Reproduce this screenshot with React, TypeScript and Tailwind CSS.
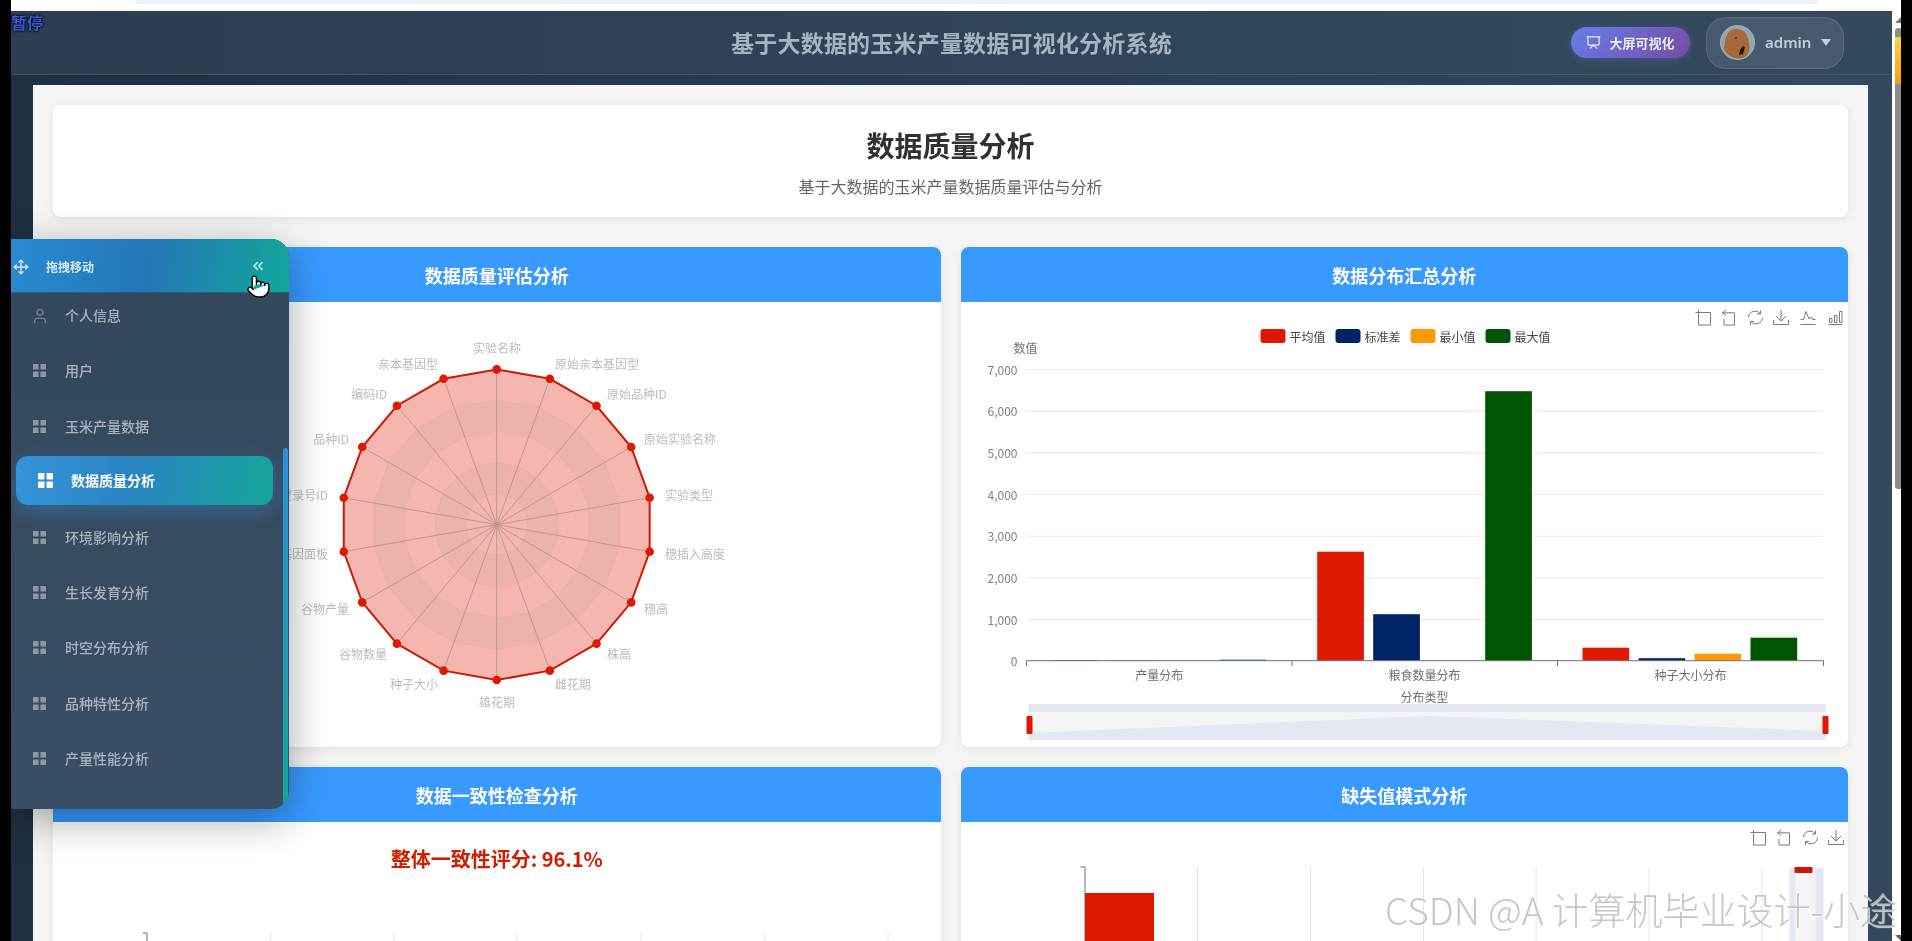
import { ChevronsLeft, Move, Pointer, Presentation, User } from "lucide-react";
import type { ReactNode } from "react";

const font = "font-['Noto_Sans_CJK_SC','Noto_Sans',sans-serif]";

const menu = ["用户", "玉米产量数据", "数据质量分析", "环境影响分析", "生长发育分析", "时空分布分析", "品种特性分析", "产量性能分析"];

// radar labels: name, x, y, anchor (page coordinates)
const radarLabels: [string, number, number, "start" | "middle" | "end"][] = [
  ["实验名称", 497, 347, "middle"],
  ["原始亲本基因型", 555, 363, "start"],
  ["原始品种ID", 607, 393, "start"],
  ["原始实验名称", 644, 438, "start"],
  ["实验类型", 665, 494, "start"],
  ["穗插入高度", 665, 553, "start"],
  ["穗高", 644, 608, "start"],
  ["株高", 607, 653, "start"],
  ["雌花期", 555, 683, "start"],
  ["雄花期", 497, 701, "middle"],
  ["种子大小", 438, 683, "end"],
  ["谷物数量", 387, 653, "end"],
  ["谷物产量", 349, 608, "end"],
  ["基因面板", 328, 553, "end"],
  ["登录号ID", 328, 494, "end"],
  ["品种ID", 349, 438, "end"],
  ["编码ID", 387, 393, "end"],
  ["亲本基因型", 438, 363, "end"],
];

const cx = 496.7;
const cy = 524.7;
const point = (i: number, r: number) => {
  const a = (i * 20 * Math.PI) / 180;
  return [cx + r * Math.sin(a), cy - r * Math.cos(a)];
};
const ring = (r: number) => radarLabels.map((_, i) => point(i, r).join(",")).join(" ");

function RadarChart() {
  return (
    <svg viewBox="53 302 887.5 445" className="block w-full h-[445px]">
      {[155.3, 124.6, 93.6, 62, 31].map((r, i) => (
        <polygon key={r} points={ring(r)} fill={i % 2 ? "#eeb2ad" : "#f5b6af"} stroke="#e8aaa5" strokeWidth="0.6" />
      ))}
      {radarLabels.map((_, i) => {
        const [x, y] = point(i, 155.3);
        return <line key={i} x1={cx} y1={cy} x2={x} y2={y} stroke="#bf9694" strokeWidth="1" />;
      })}
      <polygon points={ring(155.3)} fill="none" stroke="#c91c05" strokeWidth="2" />
      {radarLabels.map((_, i) => {
        const [x, y] = point(i, 155.3);
        return <circle key={i} cx={x} cy={y} r="4.3" fill="#dd1a00" />;
      })}
      {radarLabels.map(([name, x, y, anchor]) => (
        <text key={name} x={x} y={y} textAnchor={anchor} dominantBaseline="central" fontSize="12" fill="#bcbcbc">
          {name}
        </text>
      ))}
    </svg>
  );
}

function ToolIcon({ x, y, d }: { x: number; y: number; d: string }) {
  return <path transform={`translate(${x} ${y})`} d={d} fill="none" stroke="#7b7b7b" strokeWidth="1" />;
}

const toolPaths = {
  zoom: "M0 2.5H15M3 0V15H15V2.5",
  back: "M4.5 0L1 2.8L4.5 5.6M1 2.8H13V15H2.5V9",
  restore: "M1 7.5A6.8 6.8 0 0 1 13 3.5M13 0.5V4H9.5M15 7.5A6.8 6.8 0 0 1 3 11.5M3 15V11.5H6.5",
  save: "M7.5 0V11M2.5 6L7.5 11L12.5 6M0 10V14.5H15V10",
  line: "M0 14.5H15M0 9.5H3L5.5 1.5L8.5 9L10.5 7L12 9.5H15",
  bar: "M0 14.5H14M1 8.5H3.5V12.5H1ZM6 5.5H8.5V12.5H6ZM11 1.5H13.5V12.5H11Z",
};

const bars = [
  { x: 1051, h: [0.7, 0.3, 0.3, 1] },
  { x: 1316.7, h: [109, 46.5, 0.2, 269.5] },
  { x: 1582, h: [13, 2.5, 7, 23] },
];
const barColors = ["#dd1a00", "#002366", "#ff9900", "#005500"];
const ticks = ["0", "1,000", "2,000", "3,000", "4,000", "5,000", "6,000", "7,000"];

function BarChart() {
  return (
    <svg viewBox="960.5 302 887.5 445" className="block w-full h-[445px]">
      <ToolIcon x={1695} y={310} d={toolPaths.zoom} />
      <ToolIcon x={1721} y={310} d={toolPaths.back} />
      <ToolIcon x={1747} y={310} d={toolPaths.restore} />
      <ToolIcon x={1773} y={310} d={toolPaths.save} />
      <ToolIcon x={1800} y={310} d={toolPaths.line} />
      <ToolIcon x={1828} y={310} d={toolPaths.bar} />

      {[["平均值", 1260], ["标准差", 1335], ["最小值", 1410], ["最大值", 1485]].map(([name, x], i) => (
        <g key={name}>
          <rect x={x} y={329} width="25" height="14" rx="3" fill={barColors[i]} />
          <text x={Number(x) + 29} y={336} dominantBaseline="central" fontSize="12" fill="#444">
            {name}
          </text>
        </g>
      ))}

      <text x="1025" y="347" textAnchor="middle" dominantBaseline="central" fontSize="12" fill="#6e7079">数值</text>
      {ticks.map((t, i) => {
        const y = 660.7 - i * 41.67;
        return (
          <g key={t}>
            {i > 0 && <line x1="1026" x2="1823" y1={y + 0.5} y2={y + 0.5} stroke="#e6e9f2" />}
            <text x="1017" y={y} textAnchor="end" dominantBaseline="central" fontSize="12" fill="#7d7f87">{t}</text>
          </g>
        );
      })}

      {bars.map((g) =>
        g.h.map((h, i) => (
          <rect key={`${g.x}-${i}`} x={g.x + i * 56} y={660.7 - h} width="46.7" height={h} fill={barColors[i]} />
        )),
      )}

      <path d="M1026 660.7H1823M1026 660.7V666M1291.5 660.7V666M1557 660.7V666M1823 660.7V666" stroke="#6e7079" fill="none" />
      {[["产量分布", 1158.7], ["粮食数量分布", 1424], ["种子大小分布", 1690]].map(([name, x]) => (
        <text key={name} x={x} y="674" textAnchor="middle" dominantBaseline="central" fontSize="12" fill="#6e7079">{name}</text>
      ))}
      <text x="1424" y="696" textAnchor="middle" dominantBaseline="central" fontSize="12" fill="#6e7079">分布类型</text>

      <rect x="1028" y="704" width="797" height="36" fill="#f5f5f5" />
      <rect x="1028" y="704" width="797" height="8" fill="#e1e6f1" />
      <polygon points="1028,733 1429,716 1825,731 1825,740 1028,740" fill="#e3e8f3" />
      <rect x="1026" y="716" width="6" height="18" rx="1" fill="#dd1a00" />
      <rect x="1822" y="716" width="6" height="18" rx="1" fill="#dd1a00" />
    </svg>
  );
}

function ConsistencyChart() {
  return (
    <svg viewBox="53 873 887.5 200" className="block w-full h-[200px]">
      <path d="M143 933H147V1073" stroke="#6e7079" fill="none" />
      {[270.7, 394, 517, 641, 765, 888].map((x) => (
        <line key={x} x1={x} x2={x} y1="933" y2="1073" stroke="#e0e6f1" />
      ))}
    </svg>
  );
}

function MissingChart() {
  return (
    <svg viewBox="960.5 822 887.5 250" className="block w-full h-[250px]">
      <ToolIcon x={1750} y={830} d={toolPaths.zoom} />
      <ToolIcon x={1776} y={830} d={toolPaths.back} />
      <ToolIcon x={1802} y={830} d={toolPaths.restore} />
      <ToolIcon x={1828} y={830} d={toolPaths.save} />
      {[1197, 1310, 1423, 1535.6, 1648.5, 1761.5].map((x) => (
        <line key={x} x1={x} x2={x} y1="867" y2="1072" stroke="#e0e6f1" />
      ))}
      <path d="M1080 867H1084.5V1072" stroke="#6e7079" fill="none" />
      <rect x="1084.5" y="893" width="69" height="180" fill="#dd1a00" />
      <rect x="1789" y="868" width="34" height="204" fill="#e3e8f3" />
      <rect x="1795" y="870" width="20" height="204" fill="#f5f5f5" />
      <rect x="1794" y="867" width="18" height="6" rx="1" fill="#cc1a00" />
    </svg>
  );
}

function Card({ title, children }: { title: string; children: ReactNode }) {
  return (
    <div className="bg-white rounded-lg overflow-hidden shadow-[0_2px_10px_rgba(0,0,0,0.08)]">
      <div className="h-[55px] pt-[2px] bg-[#3899ff] flex items-center justify-center text-white text-[18px] font-bold">
        {title}
      </div>
      {children}
    </div>
  );
}

function GridIcon({ size, className }: { size: number; className: string }) {
  return (
    <svg width={size} height={size} viewBox="0 0 14 14" className={className} fill="currentColor">
      <rect x="0" y="0" width="6" height="6" rx="0.6" />
      <rect x="8" y="0" width="6" height="6" rx="0.6" />
      <rect x="0" y="8" width="6" height="6" rx="0.6" />
      <rect x="8" y="8" width="6" height="6" rx="0.6" />
    </svg>
  );
}

function Sidebar() {
  return (
    <div className="absolute left-[11px] top-[239px] w-[278px] h-[570px] rounded-r-[18px] overflow-hidden bg-[linear-gradient(180deg,#33475c,#3a4e65)] shadow-[0_10px_40px_rgba(0,0,0,0.35)]">
      <div className="relative h-[54px] pt-[3px] flex items-center bg-[linear-gradient(100deg,#2a8ad2_0%,#2277b6_50%,#12a79b_100%)] border-b border-[#2a5f80] text-[#d8e8f2]">
        <Move size={16} className="ml-[2px]" />
        <span className="ml-[17px] text-[12px] font-bold">拖拽移动</span>
        <ChevronsLeft size={16} strokeWidth={2.5} className="ml-auto mr-[23px] -mt-[2px] text-[#bfe3e6]" />
      </div>
      <div className="-mt-[3px]">
        <div className="h-[49px] mb-[6.4px] pt-[2px] pl-[20px] flex items-center text-[14px] font-medium text-[#aab3bc]">
          <User size={18} strokeWidth={1.5} className="text-[#7f8c99]" />
          <span className="ml-[16px]">个人信息</span>
        </div>
        {menu.map((name) =>
          name === "数据质量分析" ? (
            <div
              key={name}
              className="h-[49px] mb-[6.4px] mx-[5px] w-[257px] pl-[22px] flex items-center rounded-[12px] text-[14px] font-bold text-white bg-[linear-gradient(100deg,#3593da,#2a85c0_45%,#15a59a)] shadow-[0_6px_20px_rgba(52,152,219,0.4)]"
            >
              <GridIcon size={15} className="text-white" />
              <span className="ml-[18px]">{name}</span>
            </div>
          ) : (
            <div key={name} className="h-[49px] mb-[6.4px] pt-[2px] pl-[22px] flex items-center text-[14px] font-medium text-[#aab3bc]">
              <GridIcon size={13} className="text-[#8c98a4]" />
              <span className="ml-[19px]">{name}</span>
            </div>
          ),
        )}
      </div>
      {/* menu scrollbar */}
      <div className="absolute right-[1px] top-[209px] bottom-[3px] w-[5px] rounded-full bg-[linear-gradient(180deg,#2f8fdc,#15a59a)]" />
    </div>
  );
}

function Avatar() {
  return (
    <svg width="35" height="35" viewBox="0 0 35 35" className="shrink-0">
      <circle cx="17.5" cy="17.5" r="17" fill="#8fa6ae" stroke="#a0b2b8" />
      <path d="M4 24C5 13 7 5 15 4C24 3 28 10 29 18C30 24 29 29 25 32C19 35 9 34 4 24Z" fill="#a8683a" />
      <path d="M20 25l3-4 2 1-2 7-4 1z" fill="#1e1410" />
      <circle cx="16" cy="13" r="1" fill="#5a3218" />
    </svg>
  );
}

export default function App() {
  return (
    <div className={`relative w-[1912px] h-[941px] overflow-hidden flex bg-black blur-[0.35px] ${font}`}>
      <div className="w-[11px] shrink-0" />
      <div className="w-[1890px] shrink-0 flex flex-col bg-white">
        <div className="h-[11px] shrink-0 pl-[124px] pr-[83px]">
          <div className="h-[4px] bg-[#edf2f7] rounded-b-md" />
        </div>
        <div className="flex flex-1 min-h-0">
          <main className="w-[1881px] h-[930px] overflow-hidden flex flex-col bg-[linear-gradient(90deg,#1f3040,#34495e)]">
            <header className="h-[64px] shrink-0 grid grid-cols-[1fr_auto_1fr] items-center px-[48px] border-b border-white/10 bg-[linear-gradient(90deg,#2c3e50,#34495e)]">
              <div />
              <h1 className="text-[23px] tracking-[0.2px] font-bold text-[#a6b4c2]">基于大数据的玉米产量数据可视化分析系统</h1>
              <div className="flex items-center justify-end gap-[16px]">
                <div className="w-[119px] h-[31px] rounded-full flex items-center justify-center gap-[8px] text-[13px] font-bold text-[#e8ecf5] bg-[linear-gradient(135deg,#667eea,#764ba2)] shadow-[0_2px_8px_rgba(102,126,234,0.3)]">
                  <Presentation size={15} />
                  大屏可视化
                </div>
                <div className="w-[138px] h-[52px] rounded-[20px] pl-[13px] flex items-center bg-white/10 border border-white/10">
                  <Avatar />
                  <span className="ml-[10px] text-[15px] font-semibold text-[#c3ced8] font-['Noto_Sans',sans-serif]">admin</span>
                  <svg width="10" height="7" viewBox="0 0 10 7" className="ml-[10px]">
                    <polygon points="0,0 10,0 5,7" fill="#c3ced8" />
                  </svg>
                </div>
              </div>
            </header>
            <div className="flex-1 min-h-0 pt-[10px] pl-[22px] pr-[24px]">
              <div className="h-full bg-[#f5f5f5] p-[20px] overflow-hidden">
                <div className="h-[112px] bg-white rounded-lg shadow-[0_2px_10px_rgba(0,0,0,0.08)] flex flex-col items-center justify-center">
                  <h2 className="text-[28px] leading-[40px] font-bold text-[#303133]">数据质量分析</h2>
                  <p className="mt-[9px] text-[16px] leading-[24px] text-[#666]">基于大数据的玉米产量数据质量评估与分析</p>
                </div>
                <div className="mt-[30px] grid grid-cols-2 gap-[20px]">
                  <Card title="数据质量评估分析">
                    <RadarChart />
                  </Card>
                  <Card title="数据分布汇总分析">
                    <BarChart />
                  </Card>
                  <Card title="数据一致性检查分析">
                    <p className="pt-[23px] text-center text-[20px] leading-[28px] font-bold text-[#cc1f00]">整体一致性评分: 96.1%</p>
                    <ConsistencyChart />
                  </Card>
                  <Card title="缺失值模式分析">
                    <MissingChart />
                  </Card>
                </div>
              </div>
            </div>
          </main>
          {/* browser scrollbar */}
          <div className="w-[9px] shrink-0 pl-[3px] flex flex-col">
            <svg width="6" height="6" viewBox="0 0 6 6" className="mt-[6px]">
              <polygon points="0,6 6,6 6,0" fill="#777" />
            </svg>
            <div className="mt-[5px] h-[461px] pt-[9px] bg-[#8e8e8e] rounded-tl-[3px] rounded-bl-[3px]">
              <div className="h-[47px] rounded-bl-[3px] bg-[linear-gradient(180deg,#ffd04a,#ff9a10)]" />
            </div>
            <svg width="6" height="6" viewBox="0 0 6 6" className="mt-auto">
              <polygon points="0,0 6,0 6,6" fill="#666" />
            </svg>
          </div>
        </div>
      </div>
      <div className="w-[11px] shrink-0" />

      <Sidebar />
      <Pointer size={25} className="absolute left-[246px] top-[274px] text-black fill-white" strokeWidth={1.3} />
      <span className="absolute left-[11px] top-[11px] text-[16px] leading-[22px] font-bold text-[#3b5bdd] [text-shadow:0_0_2px_#000,0_0_2px_#000,0_0_2px_#000]">暂停</span>
      <span className="absolute left-[1385px] top-[885px] text-[37px] leading-[48px] font-light whitespace-nowrap text-[#bcbcbc]/85 [text-shadow:1px_1px_1px_rgba(255,255,255,0.8)]">
        CSDN @A 计算机毕业设计-小途
      </span>
    </div>
  );
}
